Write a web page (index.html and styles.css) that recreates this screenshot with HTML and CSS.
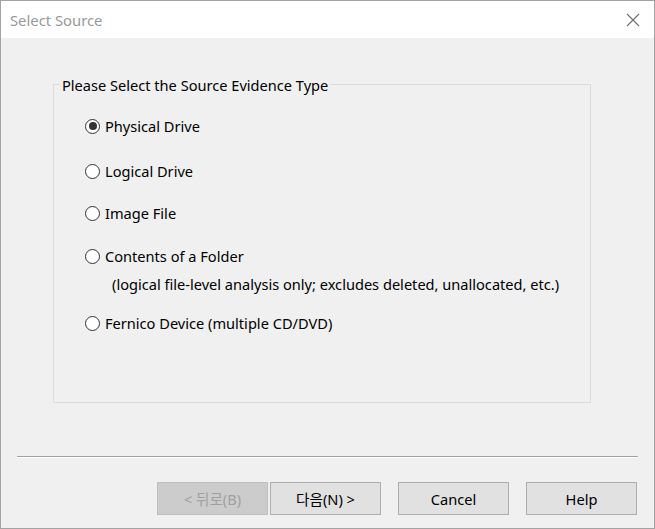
FILE: index.html
```html
<!DOCTYPE html>
<html lang="en">
<head>
<meta charset="utf-8">
<title>Select Source</title>
<link rel="stylesheet" href="styles.css">
</head>
<body>
<div class="window">
  <div class="titlebar">
    <span class="title">Select Source</span>
    <svg class="close" width="14" height="14" viewBox="0 0 14 14"><path d="M1 1 L13 13 M13 1 L1 13" stroke="#6d6d6d" stroke-width="1.1" fill="none"/></svg>
  </div>
  <div class="content">
    <fieldset class="group">
      <legend class="legend">Please Select the Source Evidence Type</legend>
      <div class="options">
        <label class="option first"><span class="radio checked"></span><span>Physical Drive</span></label>
        <label class="option gap-a"><span class="radio"></span><span>Logical Drive</span></label>
        <label class="option gap-b"><span class="radio"></span><span>Image File</span></label>
        <label class="option gap-c"><span class="radio"></span><span>Contents of a Folder</span></label>
        <div class="note">(logical file-level analysis only; excludes deleted, unallocated, etc.)</div>
        <label class="option gap-d"><span class="radio"></span><span>Fernico Device (multiple CD/DVD)</span></label>
      </div>
    </fieldset>
    <div class="footer">
      <div class="separator"></div>
      <div class="buttons">
        <button class="btn disabled">&lt; 뒤로(B)</button>
        <button class="btn next">다음(N) &gt;</button>
        <button class="btn cancel">Cancel</button>
        <button class="btn help">Help</button>
      </div>
    </div>
  </div>
</div>
</body>
</html>
```

FILE: styles.css
```css
html, body {
  margin: 0;
  padding: 0;
  background: #f0f0f0;
}
body {
  font-family: "Noto Sans", "Noto Sans CJK KR", sans-serif;
  font-size: 14.6px;
  color: #000;
}
.window {
  width: 655px;
  height: 529px;
  box-sizing: border-box;
  border: 1px solid #a3a3a3;
  background: #f0f0f0;
  display: flex;
  flex-direction: column;
}
.titlebar {
  height: 37px;
  background: #fff;
  display: flex;
  align-items: center;
  justify-content: space-between;
  padding: 0 14px 0 9px;
  flex: none;
}
.title {
  color: #999;
  font-size: 14.8px;
}
.close {
  display: block;
}
.content {
  flex: 1;
  display: flex;
  flex-direction: column;
}
.group {
  margin: 36px 0 0 52px;
  width: 538px;
  height: 329px;
  box-sizing: border-box;
  border: 1px solid #dcdcdc;
  padding: 0 0 0 6px;
}
.legend {
  padding: 0 2px;
  line-height: 20px;
  position: relative;
  top: 1px;
}
.options {
  display: flex;
  flex-direction: column;
  padding-left: 25px;
  padding-top: 22px;
}
.option {
  display: flex;
  align-items: center;
  height: 20px;
  gap: 5px;
}
.gap-a { margin-top: 25px; }
.gap-b { margin-top: 22px; }
.gap-c { margin-top: 23px; }
.gap-d { margin-top: 19px; }
.note {
  margin-top: 8px;
  height: 20px;
  line-height: 20px;
  padding-left: 27px;
}
.radio {
  width: 13px;
  height: 13px;
  border: 1px solid #333;
  border-radius: 50%;
  background: #fff;
  box-sizing: content-box;
  display: flex;
  align-items: center;
  justify-content: center;
  flex: none;
}
.radio.checked::after {
  content: "";
  width: 8px;
  height: 8px;
  border-radius: 50%;
  background: #333;
}
.footer {
  margin-top: auto;
  padding-bottom: 13px;
}
.separator {
  margin: 0 16px;
  height: 1px;
  background: #a0a0a0;
  border-bottom: 1px solid #fff;
}
.buttons {
  margin-top: 24px;
  display: flex;
  justify-content: flex-end;
  padding-right: 17px;
}
.btn {
  width: 111px;
  height: 33px;
  box-sizing: border-box;
  border: 1px solid #adadad;
  background: #e1e1e1;
  font-family: "Noto Sans", "Noto Sans CJK KR", sans-serif;
  font-size: 14.6px;
  color: #000;
  padding: 0;
}
.btn.disabled {
  background: #cccccc;
  border-color: #bfbfbf;
  color: #a0a0a0;
}
.btn.next { margin-left: 2px; }
.btn.cancel { margin-left: 17px; }
.btn.help { margin-left: 17px; }
```
